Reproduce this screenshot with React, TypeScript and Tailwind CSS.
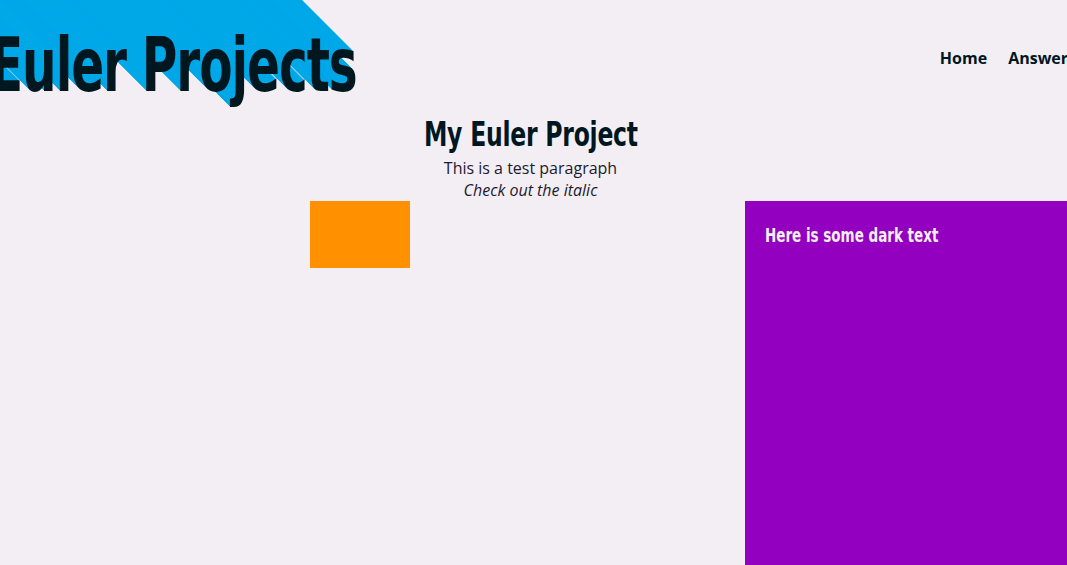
import React from 'react';

// long diagonal shadow behind the site title; x offsets are stretched to undo the title's horizontal squeeze
const TITLE_SCALE = 0.72;
const longShadow = Array.from(
  { length: 140 },
  (_, i) => `-${((i + 1) / TITLE_SCALE).toFixed(2)}px -${i + 1}px 0 #00a8e8`
).join(', ');

export default function App() {
  return (
    <div className="h-screen w-screen overflow-hidden bg-[#f3eef4] flex flex-col">
      <header className="flex items-start w-[1100px] h-[117px] shrink-0">
        <h1
          className="inline-block origin-left scale-x-[0.72] -ml-[10px] mt-[28px] text-[75px] leading-none font-bold tracking-[-0.02em] text-[#00171f] font-['DejaVu_Sans_Condensed',sans-serif] whitespace-nowrap"
          style={{ textShadow: longShadow }}
        >
          Euler Projects
        </h1>
        <nav className="ml-auto mt-[46px] pr-[24px]">
          <ul className="flex gap-[21px] font-['Open_Sans',sans-serif] font-bold text-[16px] text-[#00171f]">
            <li>Home</li>
            <li>Answers</li>
          </ul>
        </nav>
      </header>

      <main className="flex flex-col items-center text-center pr-[6px]">
        <h2 className="inline-block scale-x-[0.77] text-[34px] leading-none font-bold tracking-[-0.01em] text-[#00171f] font-['DejaVu_Sans_Condensed',sans-serif] whitespace-nowrap">
          My Euler Project
        </h2>
        <p className="mt-[6px] font-['Open_Sans',sans-serif] text-[16px] leading-[22px] text-[#1c1a2e]">
          This is a test paragraph
        </p>
        <p className="font-['Open_Sans',sans-serif] italic text-[16px] leading-[22px] text-[#1c1a2e]">
          Check out the italic
        </p>
      </main>

      <div className="flex flex-1">
        <div className="ml-[310px] w-[100px] h-[67px] bg-[#ff9100] shrink-0" />
        <div className="ml-[335px] flex-1 bg-[#9400bf] pt-[19px] px-5">
          <h3 className="inline-block origin-left scale-x-[0.75] text-[20px] leading-[30px] font-bold text-[#f3eef4] font-['DejaVu_Sans_Condensed',sans-serif] whitespace-nowrap">
            Here is some dark text
          </h3>
        </div>
      </div>
    </div>
  );
}
